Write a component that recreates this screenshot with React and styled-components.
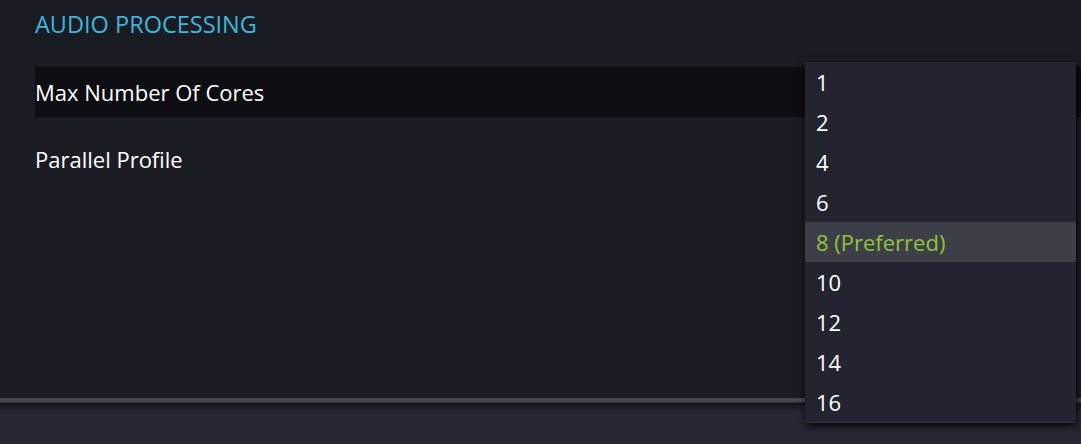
import React from "react";
import styled, { createGlobalStyle } from "styled-components";

const Global = createGlobalStyle`
  html, body { margin: 0; padding: 0; background: #1a1c24; }
  body { font-family: "Open Sans", "Noto Sans", sans-serif; }
  #root { width: 1081px; height: 444px; overflow: hidden; }
`;

const Page = styled.div`
  position: relative;
  width: 1081px;
  height: 444px;
  display: flex;
  flex-direction: column;
  background: #1a1c24;
`;

const Content = styled.div`
  height: 398px;
  padding: 8px 0 0 35px;
  box-sizing: border-box;
  display: flex;
  flex-direction: column;
`;

const Heading = styled.h2`
  margin: 0;
  height: 32px;
  font-size: 23.5px;
  font-weight: 500;
  line-height: 32px;
  color: #40b6da;
  letter-spacing: 0;
`;

const Rows = styled.div`
  margin-top: 27px;
  display: flex;
  flex-direction: column;
  gap: 17px;
`;

const Row = styled.div`
  height: 50px;
  display: flex;
  align-items: center;
  font-size: 22px;
  color: #ffffff;
  background: ${(p) => (p.$active ? "#0d0e12" : "transparent")};
`;

const Separator = styled.div`
  height: 4px;
  background: #474849;
  border-bottom: 1px solid #2e2f33;
`;

const Footer = styled.div`
  flex: 1;
  background: linear-gradient(#14151b 0px, #1d1f27 5px, #262834 9px, #262834);
`;

const Menu = styled.ul`
  position: absolute;
  left: 805px;
  top: 62px;
  width: 271px;
  margin: 0;
  padding: 0;
  list-style: none;
  background: #22242f;
  border-bottom: 1px solid #2c2e3a;
  box-shadow: 0 4px 8px rgba(0, 0, 0, 0.55), 2px 2px 4px rgba(0, 0, 0, 0.4);
`;

const Item = styled.li`
  height: 40px;
  padding-left: 11px;
  display: flex;
  align-items: center;
  font-size: 22px;
  color: ${(p) => (p.$selected ? "#8fc43a" : "#ffffff")};
  background: ${(p) => (p.$selected ? "#3c3f48" : "transparent")};
`;

const options = ["1", "2", "4", "6", "8 (Preferred)", "10", "12", "14", "16"];

export default function App() {
  return (
    <Page>
      <Global />
      <Content>
        <Heading>AUDIO PROCESSING</Heading>
        <Rows>
          <Row $active>Max Number Of Cores</Row>
          <Row>Parallel Profile</Row>
        </Rows>
      </Content>
      <Separator />
      <Footer />
      <Menu>
        {options.map((o) => (
          <Item key={o} $selected={o.startsWith("8")}>
            {o}
          </Item>
        ))}
      </Menu>
    </Page>
  );
}
